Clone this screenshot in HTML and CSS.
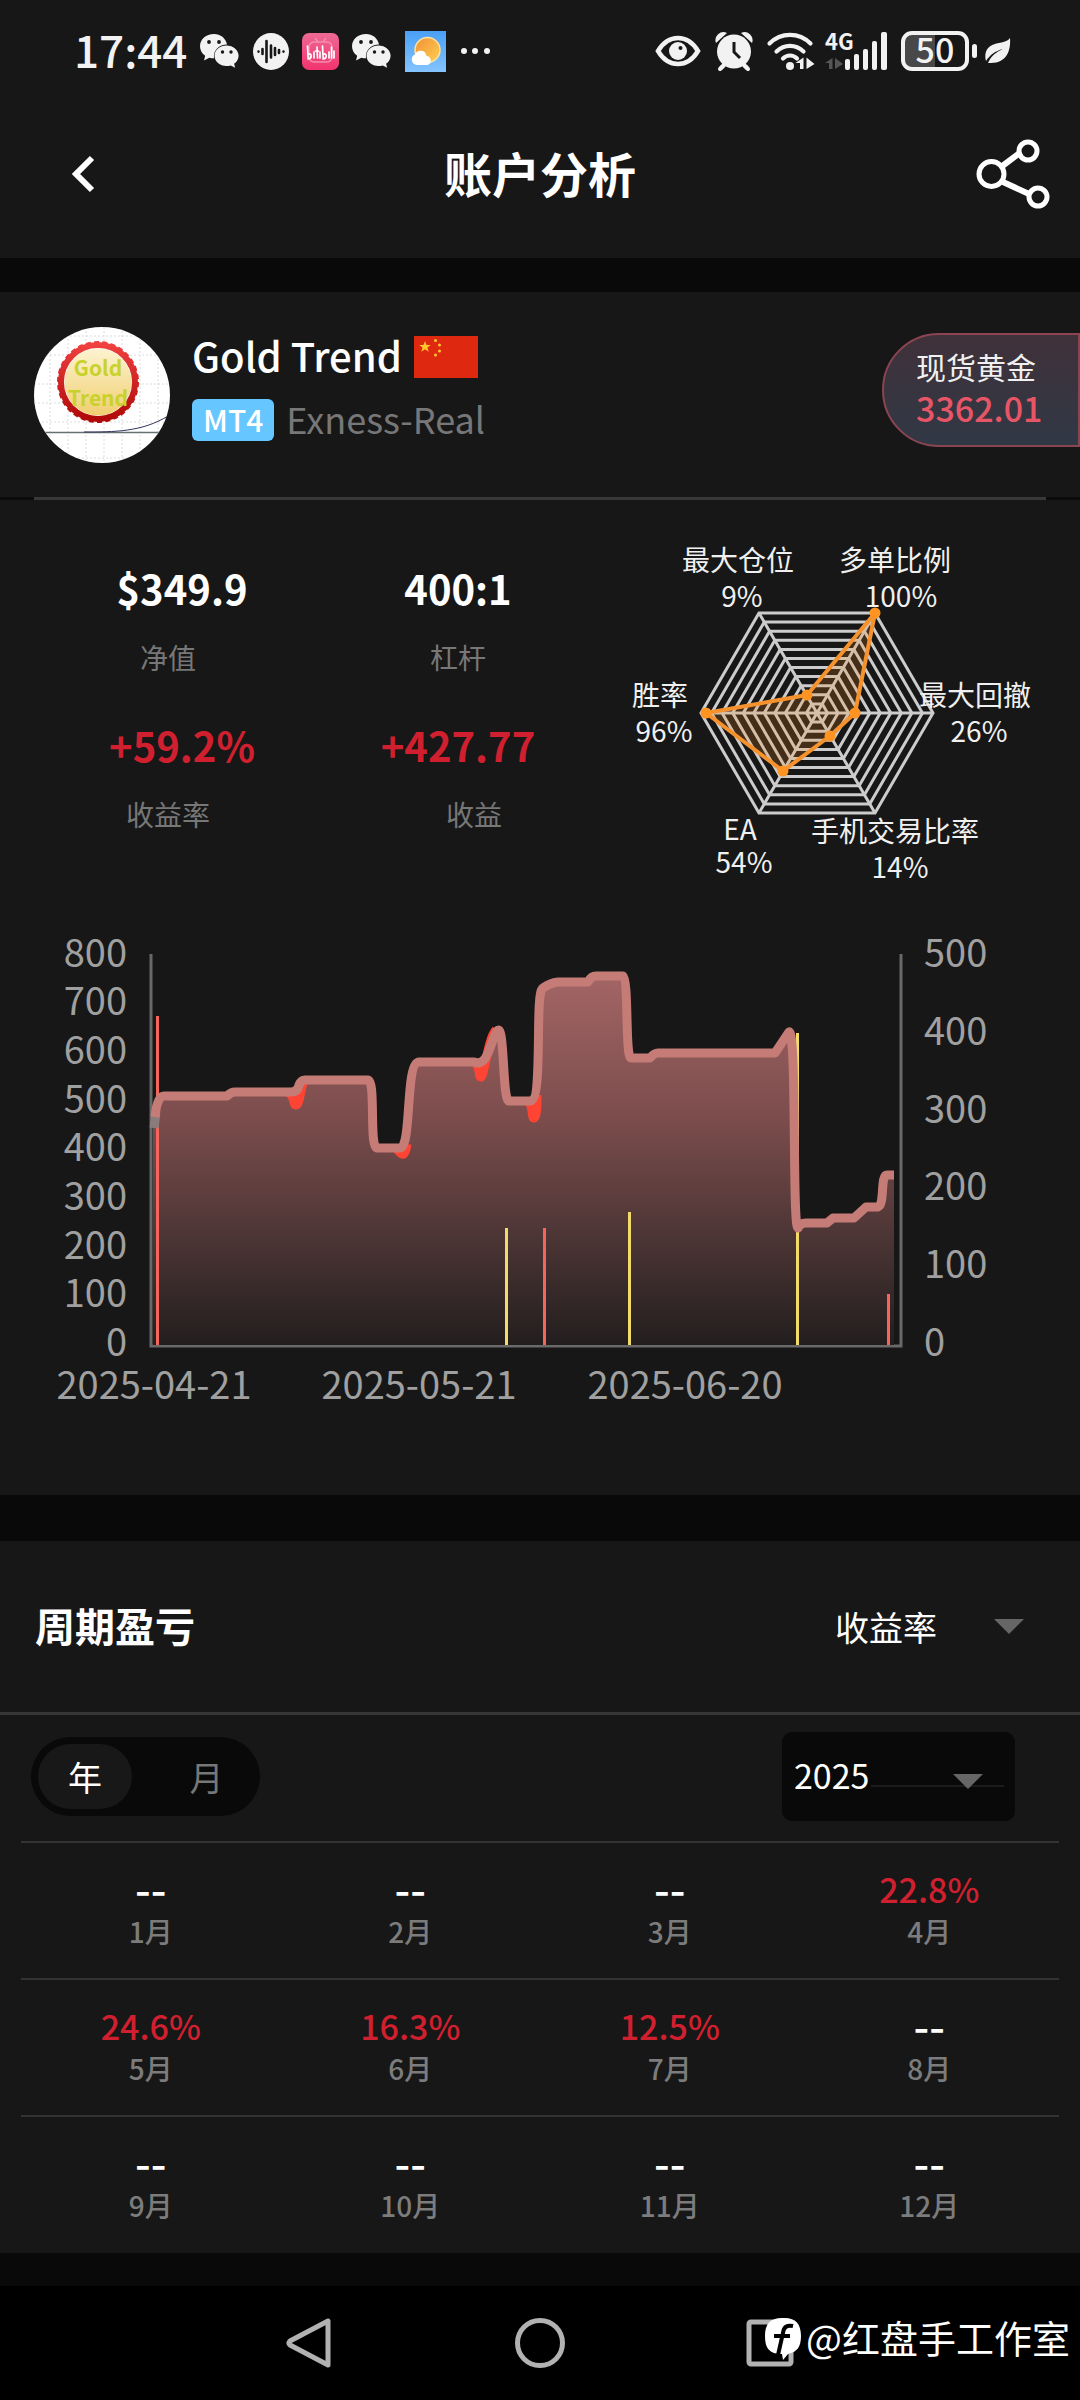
FILE: index.html
```html
<!DOCTYPE html>
<html lang="zh-CN">
<head>
<meta charset="utf-8">
<meta name="viewport" content="width=device-width, initial-scale=1">
<title>账户分析</title>
<link rel="stylesheet" href="styles.css">
</head>
<body>
<svg class="defs" width="0" height="0" aria-hidden="true">
  <symbol id="wechat" viewBox="0 0 40 34">
    <path fill="#f2f2f2" d="M14 0C6 0 0 5.400 0 12.200c0 4 2 7.300 5.200 9.600L4 26.500l5.400-2.800c1.500.4 3 .6 4.600.6C13 16 19 10.500 27 10.400 25.800 4.200 20.500 0 14 0z"/>
    <path fill="#f2f2f2" d="M26.500 11.500c-6.600 0-12 4.500-12 10.300s5.400 10.300 12 10.300c1.500 0 3-.2 4.300-.7l4.400 2.400-1.100-4c2.800-1.900 4.500-4.800 4.500-8 0-5.800-5.500-10.300-12.100-10.300z"/>
    <g fill="#171717"><circle cx="9" cy="8" r="1.900"/><circle cx="19" cy="8" r="1.900"/><circle cx="22.500" cy="18" r="1.700"/><circle cx="31" cy="18" r="1.700"/></g>
  </symbol>
</svg>

<header class="top">
  <div class="status">
    <div class="status-left">
      <span class="clock">17:44</span>
      <svg width="40" height="34"><use href="#wechat"/></svg>
      <svg width="36" height="37" viewBox="0 0 36 37"><ellipse cx="18" cy="18.500" rx="18" ry="18.500" fill="#f2f2f2"/><g stroke="#171717" stroke-width="2.600" stroke-linecap="round"><path d="M5.500 18.500v.1M9.500 16v5M13.500 8v21M18 12.500v12M22 15v7M26 17v3M30.500 18.500v.1"/></g></svg>
      <svg width="37" height="37" viewBox="0 0 37 37"><defs><linearGradient id="pink" x2="0" y2="1"><stop stop-color="#ee6a95"/><stop offset="1" stop-color="#f2336f"/></linearGradient></defs><rect width="37" height="37" rx="7" fill="url(#pink)"/><g fill="none" stroke="#f58db0" stroke-width="1.500"><rect x="7" y="9" width="23" height="20" rx="5"/><path d="M13 5l3 4M24 5l-3 4"/></g><g fill="none" stroke="#fff" stroke-width="1.700" stroke-linecap="round"><path d="M5.500 13l.7 13c4-.5 4-6 .4-5M12 19v6M15 14l.5 11M18 19v6M13.500 18h3M20.500 13l.7 13c4-.5 4-6 .4-5M27 19v6M29.500 14v11M32 18v7"/></g></svg>
      <svg width="40" height="34"><use href="#wechat"/></svg>
      <svg width="41" height="41" viewBox="0 0 41 41"><defs><linearGradient id="sky" x2="0" y2="1"><stop stop-color="#4a9ff5"/><stop offset="1" stop-color="#85c4ff"/></linearGradient><linearGradient id="sun" x2="1" y2="1"><stop stop-color="#f0903a"/><stop offset="1" stop-color="#ffd04d"/></linearGradient></defs><rect width="41" height="41" fill="url(#sky)"/><circle cx="22.500" cy="19" r="12.500" fill="url(#sun)" stroke="#ffe2a0" stroke-width="1.500"/><path fill="#fff" d="M12 34a5.500 5.500 0 0 1-2-10.500 6 6 0 0 1 11.500 1.500 4.600 4.600 0 0 1 1 9z"/></svg>
      <svg width="32" height="8" viewBox="0 0 32 8" fill="#f2f2f2"><circle cx="5" cy="4" r="3"/><circle cx="16" cy="4" r="3"/><circle cx="28" cy="4" r="3"/></svg>
    </div>
    <div class="status-right">
      <svg width="46" height="32" viewBox="0 0 46 32"><path fill="none" stroke="#f2f2f2" stroke-width="4.500" d="M3 16C9 6 16 3 23 3s14 3 20 13C37 26 30 29 23 29S9 26 3 16z"/><circle cx="23" cy="16" r="9" fill="#f2f2f2"/><circle cx="25.500" cy="13" r="2" fill="#171717"/></svg>
      <svg width="38" height="38" viewBox="0 0 38 38"><g stroke="#f2f2f2" stroke-width="4" stroke-linecap="round"><path d="M10 32l-5 5M28 32l5 5"/></g><path fill="#f2f2f2" d="M1 11A8 8 0 0 1 12 1zM37 11A8 8 0 0 0 26 1z"/><circle cx="19" cy="19.500" r="18" fill="#171717"/><circle cx="19" cy="19.500" r="17" fill="#f2f2f2"/><path d="M10 32l-4 4M28 32l4 4" stroke="#f2f2f2" stroke-width="4" stroke-linecap="round"/><path d="M19 10v10l6 6" fill="none" stroke="#171717" stroke-width="3"/></svg>
      <svg width="47" height="38" viewBox="0 0 47 38"><g fill="none" stroke="#f2f2f2" stroke-width="4.200" stroke-linecap="round"><path d="M2.500 11.500C14 0 32 0 43.500 11.500M9.500 19.500c8-7.500 19-7.500 27 0M16 26.500c4-4 10-4 14 0"/></g><circle cx="23" cy="34" r="4" fill="#f2f2f2"/><path fill="#f2f2f2" d="M36.500 25.500V37H33v-6h-4.500zM39.500 37V25.500l8 6.500z"/></svg>
      <svg class="signal" width="62" height="40" viewBox="0 0 62 40"><text class="net" x="0" y="19">4G</text><path fill="#555" d="M7.500 27v11H4v-6H0zM10 38V27l8 6z"/><g fill="#f2f2f2"><rect x="20" y="28" width="5" height="11" rx="2"/><rect x="29" y="23" width="5" height="16" rx="2"/><rect x="38" y="18" width="5" height="21" rx="2"/><rect x="47" y="10" width="5" height="29" rx="2"/><rect x="56" y="1" width="6" height="38" rx="2"/></g></svg>
      <svg width="76" height="40" viewBox="0 0 76 40"><path d="M11 3h23v34H11a8 8 0 0 1-8-8V11a8 8 0 0 1 8-8z" fill="#484848"/><rect x="2" y="2" width="64" height="36" rx="9" fill="none" stroke="#f2f2f2" stroke-width="4"/><rect x="71" y="13" width="5" height="14" rx="2.500" fill="#f2f2f2"/><text class="charge" x="34" y="32" text-anchor="middle">50</text></svg>
      <svg class="leaf" width="26" height="26" viewBox="0 0 26 26"><path fill="#f2f2f2" d="M25 0c1 12-3 25-19 25L3 25C6 18 11 14 18 11 10 13 5 17 1 23-2 10 7 6 14 5c5-.8 9-2 11-5z"/></svg>
    </div>
  </div>
  <div class="titlebar">
    <button class="icon-btn" aria-label="返回"><svg width="24" height="36" viewBox="0 0 24 36"><path d="M20 2L4 18l16 16" fill="none" stroke="#fff" stroke-width="6"/></svg></button>
    <h1>账户分析</h1>
    <button class="icon-btn" aria-label="分享"><svg width="74" height="72" viewBox="0 0 74 72" fill="none" stroke="#fff" stroke-width="5"><circle cx="15.500" cy="36" r="12.500"/><circle cx="52" cy="13" r="9"/><circle cx="62" cy="59" r="9"/><path d="M25 29l20-15M27 44l26 12" stroke-width="6"/></svg></button>
  </div>
</header>

<main>
  <section class="panel account">
    <div class="profile">
      <svg class="avatar" width="136" height="136" viewBox="0 0 136 136" role="img" aria-label="Gold Trend">
        <defs><clipPath id="round"><circle cx="68" cy="68" r="68"/></clipPath>
        <linearGradient id="red" x2="0" y2="1"><stop stop-color="#f04040"/><stop offset="1" stop-color="#b00808"/></linearGradient>
        <linearGradient id="gold" x2="0" y2="1"><stop stop-color="#fdf3d0"/><stop offset="1" stop-color="#f0cf70"/></linearGradient></defs>
        <g clip-path="url(#round)"><rect width="136" height="136" fill="#fff"/>
        <path d="M16 0v136M34 0v136M52 0v136M70 0v136M88 0v136M106 0v136M124 0v136M0 9h136M0 28h136M0 57h136M0 76h136M0 95h136M0 131h136" stroke="#dcdcdc" stroke-dasharray="2 2"/>
        <path d="M0 105.500h136" stroke="#667070" stroke-width="1.500"/><path d="M50 105c30 0 58 0 84-16" fill="none" stroke="#343460"/></g>
        <circle cx="64" cy="55" r="37" fill="none" stroke="url(#red)" stroke-width="6"/><circle cx="64" cy="55" r="39.500" fill="none" stroke="url(#red)" stroke-width="3" stroke-dasharray="5 3.270"/>
        <circle cx="64" cy="55" r="33.500" fill="url(#gold)"/>
        <text class="seal" x="64" y="49" text-anchor="middle">Gold</text><text class="seal" x="64" y="79" text-anchor="middle">Trend</text>
      </svg>
      <div class="who">
        <h2><span>Gold Trend</span><svg width="64" height="42" viewBox="0 0 64 42" role="img" aria-label="中国"><rect width="64" height="42" fill="#de2910"/><g fill="#ffc72c"><path d="M11 5l1.500 4h4.300l-3.400 2.600 1.300 4.200L11 13.300l-3.700 2.500 1.300-4.200L5.200 9h4.300z"/><circle cx="21.500" cy="4.500" r="1.500"/><circle cx="25.500" cy="9" r="1.500"/><circle cx="25.500" cy="15" r="1.500"/><circle cx="21.500" cy="19" r="1.500"/></g></svg></h2>
        <p><span class="badge">MT4</span><span class="server">Exness-Real</span></p>
      </div>
      <a class="quote" href="#gold"><span>现货黄金</span><strong>3362.01</strong></a>
    </div>
    <hr class="rule">

    <div class="overview">
      <dl class="stats">
        <div><dd>$349.9</dd><dt class="pull">净值</dt></div>
        <div><dd>400:1</dd><dt>杠杆</dt></div>
        <div class="up"><dd>+59.2%</dd><dt class="pull">收益率</dt></div>
        <div class="up"><dd>+427.77</dd><dt class="push">收益</dt></div>
      </dl>
      <svg class="radar" viewBox="600 500 480 400" role="img" aria-label="账户指标">
        <defs><path id="hex" vector-effect="non-scaling-stroke" d="M116 0L58 100H-58L-116 0L-58-100H58z"/></defs>
        <g transform="translate(817 713)">
          <g class="grid">
            <use href="#hex"/><use href="#hex" transform="scale(.909)"/><use href="#hex" transform="scale(.818)"/><use href="#hex" transform="scale(.727)"/><use href="#hex" transform="scale(.636)"/><use href="#hex" transform="scale(.545)"/><use href="#hex" transform="scale(.455)"/><use href="#hex" transform="scale(.364)"/><use href="#hex" transform="scale(.273)"/><use href="#hex" transform="scale(.182)"/><use href="#hex" transform="scale(.091)"/>
            <path d="M-116 0h232M-58-100L58 100M58-100L-58 100"/>
          </g>
          <path class="shape-fill" d="M-58-100L0 0-10-18L58-100 38 0 13 23-34 58-111 0-10-18z"/>
          <path class="shape-line" d="M58-100L38 0 13 23-34 58-111 0-10-18z"/>
          <g fill="#ff9422"><circle cx="58" cy="-100" r="5.500"/><circle cx="38" cy="0" r="5.500"/><circle cx="13" cy="23" r="5.500"/><circle cx="-34" cy="58" r="5.500"/><circle cx="-111" cy="0" r="5.500"/><circle cx="-10" cy="-18" r="5.500"/></g>
        </g>
        <g class="radar-label" text-anchor="middle">
          <text x="738" y="571">最大仓位</text><text x="742" y="607">9%</text>
          <text x="895" y="571">多单比例</text><text x="901" y="607">100%</text>
          <text x="660" y="706">胜率</text><text x="664" y="742">96%</text>
          <text x="975" y="706">最大回撤</text><text x="979" y="742">26%</text>
          <text x="740" y="840">EA</text><text x="744" y="873">54%</text>
          <text x="895" y="842">手机交易比率</text><text x="900" y="878">14%</text>
        </g>
      </svg>
    </div>

    <svg class="chart" viewBox="0 900 1080 595" role="img" aria-label="净值走势">
      <defs><linearGradient id="area" gradientUnits="userSpaceOnUse" x1="0" y1="970" x2="0" y2="1345"><stop stop-color="#a56666"/><stop offset=".4" stop-color="#7b4c4c"/><stop offset=".7" stop-color="#4e3636"/><stop offset="1" stop-color="#231e1e"/></linearGradient></defs>
      <path class="axis" d="M151 954v392h750V954"/>
      <path fill="url(#area)" d="M153 1128Q156 1096 164 1096H227Q231 1092 235 1092H293Q298 1092 299 1085 301 1080 305 1080H368C376 1080 369 1148 377 1148H400C412 1148 405 1062 419 1062H474C488 1068 490 1042 497 1031 505 1020 502 1101 509 1101H530C544 1101 534 991 543 988Q550 983 558 982H588Q591 976 596 976H623C629 980 625 1058 631 1058H650Q654 1053 658 1053H775L789 1032C797 1028 792 1228 798 1228Q800 1223 806 1223H827L833 1218H854L866 1207H878C885 1205 880 1175 887 1175H894V1345H153z"/>
      <g fill="#f5655c"><rect x="156" y="1016" width="3" height="329"/><rect x="543" y="1228" width="3" height="117"/><rect x="887" y="1294" width="3" height="51"/></g>
      <g fill="#f3db6a"><rect x="505" y="1228" width="3" height="117"/><rect x="628" y="1212" width="3" height="133"/><rect x="796" y="1033" width="3" height="312"/></g>
      <g class="line loss"><path d="M287 1092C296 1095 292 1105 296 1105S300 1088 304 1081M396 1148C402 1156 405 1158 407 1144M474 1062C481 1066 478 1077 481 1077S488 1038 496 1030M527 1101C534 1104 531 1118 534 1118S537 1105 537 1095"/></g>
      <path class="line start" d="M154 1128L156 1113"/>
      <path class="line" d="M155 1117Q157 1096 164 1096H227Q231 1092 235 1092H291Q298 1092 299 1085 301 1080 305 1080H368C376 1080 369 1148 377 1148H400C412 1148 405 1062 419 1062H474C488 1068 490 1042 497 1031 505 1020 502 1101 509 1101H530C544 1101 534 991 543 988Q550 983 558 982H588Q591 976 596 976H623C629 980 625 1058 631 1058H650Q654 1053 658 1053H775L789 1032C797 1028 792 1228 798 1228Q800 1223 806 1223H827L833 1218H854L866 1207H878C885 1205 880 1175 887 1175H894"/>
      <g class="tick" text-anchor="end"><text x="127" y="967">800</text><text x="127" y="1015">700</text><text x="127" y="1064">600</text><text x="127" y="1113">500</text><text x="127" y="1161">400</text><text x="127" y="1210">300</text><text x="127" y="1259">200</text><text x="127" y="1307">100</text><text x="127" y="1356">0</text></g>
      <g class="tick"><text x="924" y="967">500</text><text x="924" y="1045">400</text><text x="924" y="1123">300</text><text x="924" y="1200">200</text><text x="924" y="1278">100</text><text x="924" y="1356">0</text></g>
      <g class="tick" text-anchor="middle"><text x="154" y="1399">2025-04-21</text><text x="419" y="1399">2025-05-21</text><text x="685" y="1399">2025-06-20</text></g>
    </svg>
  </section>

  <section class="panel period">
    <div class="period-head">
      <h2>周期盈亏</h2>
      <div class="pick metric">
        <select aria-label="指标"><option>收益率</option><option>收益</option></select>
        <svg width="30" height="15" viewBox="0 0 30 15"><path d="M0 0h30L15 15z" fill="#666"/></svg>
      </div>
    </div>
    <div class="filters">
      <div class="toggle">
        <input type="radio" name="span" id="by-year" checked><label for="by-year">年</label>
        <input type="radio" name="span" id="by-month"><label for="by-month">月</label>
      </div>
      <div class="pick year">
        <select aria-label="年份"><option>2025</option></select>
        <svg width="133" height="15" viewBox="0 0 133 15"><path d="M0 12h133" stroke="#1c1c1c" stroke-width="2"/><path d="M82 0h30L97 15z" fill="#666"/></svg>
      </div>
    </div>
    <table class="months">
      <tr><td><b class="none">--</b>1月</td><td><b class="none">--</b>2月</td><td><b class="none">--</b>3月</td><td><b>22.8%</b>4月</td></tr>
      <tr><td><b>24.6%</b>5月</td><td><b>16.3%</b>6月</td><td><b>12.5%</b>7月</td><td><b class="none">--</b>8月</td></tr>
      <tr><td><b class="none">--</b>9月</td><td><b class="none">--</b>10月</td><td><b class="none">--</b>11月</td><td><b class="none">--</b>12月</td></tr>
    </table>
  </section>
</main>

<nav class="sysnav">
  <button aria-label="返回"><svg width="50" height="52" viewBox="0 0 50 52"><path d="M43 4v44L5 28q-2-2 0-4z"/></svg></button>
  <button aria-label="主页"><svg width="50" height="52" viewBox="0 0 50 52"><circle cx="25" cy="26" r="22.500"/></svg></button>
  <button aria-label="最近任务"><svg width="50" height="52" viewBox="0 0 50 52"><rect x="4" y="5" width="42" height="42" rx="2"/></svg></button>
  <div class="watermark">
    <svg width="38" height="44" viewBox="0 0 38 44"><path fill="#fff" d="M18 1C31 0 37 6 37 19c0 11-4 16-13 18l-5 6-1-6C5 37 1 31 1 19 1 7 6 1 18 1z"/><path d="M29 9q-9-2-10 7l-5 22M10 19h16" fill="none" stroke="#000" stroke-width="4"/></svg>
    <span>@红盘手工作室</span>
  </div>
</nav>
</body>
</html>
```

FILE: styles.css
```css
* { box-sizing: border-box; }
body {
  margin: 0;
  background: #090909;
  color: #fff;
  font-family: "Noto Sans CJK SC", "Noto Sans", sans-serif;
  font-size: 28px;
}
h1, h2, p, dl, dd { margin: 0; }
svg { display: block; flex: none; overflow: visible; }
.defs { position: absolute; }
button { padding: 0; border: 0; background: none; }

.top { background: #171717; height: 258px; margin-bottom: 34px; }
.status {
  display: flex;
  justify-content: space-between;
  align-items: center;
  height: 102px;
  padding: 0 69px 0 74px;
}
.status-left, .status-right { display: flex; align-items: center; gap: 13px; }
.status-right { gap: 14px; }
.clock { padding-bottom: 4px; color: #f2f2f2; font-size: 44px; font-weight: 500; line-height: 48px; }
.net { font-size: 22px; font-weight: 700; fill: #f2f2f2; }
.charge { font-size: 34px; font-weight: 500; fill: #f2f2f2; }
.signal { margin-left: -3px; }
.leaf { margin-left: -6px; }
.titlebar {
  display: grid;
  grid-template-columns: 80px 1fr 122px;
  align-items: center;
  height: 144px;
  padding: 0 30px 0 72px;
  text-align: center;
}
.titlebar h1 { padding-bottom: 4px; font-size: 48px; line-height: 64px; }
.icon-btn:last-child { justify-self: end; }

.panel { background: #171717; }
.profile { display: flex; align-items: flex-start; gap: 22px; height: 205px; padding: 35px 0 0 34px; }
.seal { font-size: 21px; font-weight: 700; fill: #c8d22c; }
.who { flex: 1; }
.who h2 { display: flex; align-items: center; gap: 12px; margin-top: 2px; font-size: 40px; font-weight: 500; line-height: 52px; }
.who h2 span { padding-bottom: 4px; }
.who p { display: flex; align-items: center; gap: 12px; margin-top: 13px; }
.badge { padding: 0 11px 2px; border-radius: 6px; background: #66c6ff; font-size: 30px; font-weight: 500; line-height: 40px; }
.server { padding-bottom: 4px; color: #777; font-size: 36px; line-height: 40px; }
.quote {
  display: flex;
  flex-direction: column;
  width: 198px;
  height: 114px;
  margin-top: 6px;
  padding: 10px 0 0 32px;
  border: 2px solid #8a4452;
  border-radius: 57px 0 0 57px;
  background: linear-gradient(#40313a, #303845);
  color: #f0f0f0;
  text-decoration: none;
}
.quote span { font-size: 30px; line-height: 42px; }
.quote strong { color: #e85566; font-size: 34px; font-weight: 500; line-height: 42px; }
.rule {
  height: 3px;
  margin: 0;
  border: 0;
  background: linear-gradient(#383838, #383838) center / calc(100% - 68px) 3px no-repeat #0b0b0b;
}

.overview { display: grid; grid-template-columns: 5fr 4fr; }
.stats {
  display: grid;
  grid-template-columns: 1fr 1fr;
  align-content: start;
  row-gap: 38px;
  padding: 58px 4px 0 44px;
  text-align: center;
}
.stats dd { font-size: 40px; font-weight: 700; line-height: 60px; }
.stats div { display: flex; flex-direction: column; gap: 19px; }
.stats dt { color: #777; font-size: 28px; font-weight: 400; line-height: 40px; }
.stats .pull { padding-right: 28px; }
.stats .push { padding-left: 32px; }
.up dd { color: #d0202f; }
.radar, .chart { width: 100%; }
.grid { fill: none; stroke: #ccc; stroke-width: 3; }
.shape-fill { fill: #ff8c1e; fill-opacity: .2; }
.shape-line { fill: none; stroke: #f5922e; stroke-width: 4; stroke-linejoin: round; }
.radar-label { font-size: 28px; font-weight: 400; fill: #f0f0f0; }
.axis { fill: none; stroke: #696969; stroke-width: 3; }
.line { fill: none; stroke: #c57c77; stroke-width: 9; stroke-linejoin: round; }
.loss { stroke: #ff4433; }
.start { stroke: #8b7c7c; }
.tick { font-size: 38px; font-weight: 400; fill: #a0a0a0; }

.period { margin-top: 46px; }
.period-head {
  display: flex;
  justify-content: space-between;
  align-items: center;
  height: 174px;
  padding: 0 56px 0 35px;
  border-bottom: 3px solid #363636;
}
.period-head h2 { padding-bottom: 4px; font-size: 40px; line-height: 56px; }
.pick { display: flex; align-items: center; position: relative; }
.pick select {
  width: 100%;
  padding: 0;
  border: 0;
  background: none;
  color: #fff;
  font: inherit;
  appearance: none;
}
.pick svg { position: absolute; right: 0; pointer-events: none; }
.metric { width: 189px; height: 56px; font-size: 34px; }
.year {
  width: 233px;
  height: 89px;
  padding: 0 12px 4px;
  border-radius: 10px;
  background: #090909;
  font-size: 34px;
}
.pick.year svg { top: 42px; right: 11px; }
.filters {
  display: flex;
  justify-content: space-between;
  align-items: center;
  height: 126px;
  padding: 0 65px 3px 31px;
}
.toggle { display: flex; width: 229px; height: 79px; padding: 7px; border-radius: 40px; background: #090909; }
.toggle input { position: absolute; opacity: 0; }
.toggle label { width: 94px; border-radius: 33px; color: #777; font-size: 34px; line-height: 65px; text-align: center; }
.toggle label:last-child { flex: 1; padding-left: 28px; }
.toggle input:checked + label { background: #181818; color: #fff; }
.months { width: calc(100% - 42px); margin: 0 21px; border-collapse: collapse; table-layout: fixed; }
.months td {
  height: 137px;
  padding: 0 0 4px;
  border-top: 2px solid #333;
  color: #7c7c7c;
  font-weight: 500;
  line-height: 38px;
  text-align: center;
}
.months b { display: block; margin-bottom: 2px; color: #d0202f; font-size: 34px; font-weight: 500; line-height: 42px; }
.months .none { margin-bottom: 6px; color: #fff; font-size: 44px; line-height: 38px; }

.sysnav {
  position: relative;
  display: flex;
  justify-content: center;
  gap: 180px;
  height: 114px;
  margin-top: 33px;
  background: #000;
}
.sysnav button svg { fill: none; stroke: #b2b2b2; stroke-width: 5; stroke-linejoin: round; }
.watermark { position: absolute; top: 24px; right: 10px; display: flex; align-items: center; gap: 4px; font-size: 38px; line-height: 54px; }
.watermark span { padding-bottom: 4px; }
```
